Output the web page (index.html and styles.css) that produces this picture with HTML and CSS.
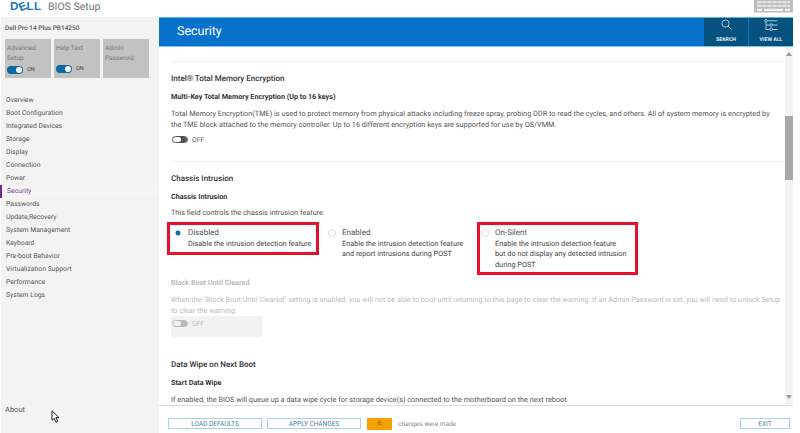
FILE: index.html
```html
<!DOCTYPE html>
<html lang="en">
<head>
<meta charset="utf-8">
<title>BIOS Setup</title>
<link rel="stylesheet" href="styles.css">
</head>
<body>
<div class="app">
  <header class="topbar">
    <span class="logo">D<span class="logo-e">E</span>LL</span>
    <span class="app-title">BIOS Setup</span>
    <svg class="kbd" viewBox="0 0 39 13" width="39" height="13" aria-hidden="true">
      <rect width="39" height="12.500" fill="#bdbdbd"/>
      <path d="M3 1h33v2.200H3zM3 4.800h33V7H3z" fill="#e4e4e4"/>
      <path d="M3 8.800h5V11H3zM10 8.800h19V11H10zM31 8.800h5V11h-5z" fill="#f2f2f2"/>
      <path d="M8 1v6M13 1v6M18 1v6M23 1v6M28 1v6M33 1v6" stroke="#bdbdbd" stroke-width=".8"/>
    </svg>
  </header>
  <div class="columns">
    <aside class="sidebar">
      <div class="model">Dell Pro 14 Plus PB14250</div>
      <div class="tiles">
        <div class="tile"><div class="tile-label">Advanced Setup</div><div class="tile-toggle"><span class="sw sw-on"></span><span>ON</span></div></div>
        <div class="tile"><div class="tile-label tile-one">Help Text</div><div class="tile-toggle"><span class="sw sw-on"></span><span>ON</span></div></div>
        <div class="tile"><div class="tile-label">Admin Password</div></div>
      </div>
      <nav class="nav">
        <a>Overview</a>
        <a>Boot Configuration</a>
        <a>Integrated Devices</a>
        <a>Storage</a>
        <a>Display</a>
        <a>Connection</a>
        <a>Power</a>
        <a class="current">Security</a>
        <a>Passwords</a>
        <a>Update,Recovery</a>
        <a>System Management</a>
        <a>Keyboard</a>
        <a>Pre-boot Behavior</a>
        <a>Virtualization Support</a>
        <a>Performance</a>
        <a>System Logs</a>
      </nav>
      <div class="about">About
        <svg class="cursor" viewBox="0 0 9 13" width="9" height="13" aria-hidden="true"><path d="M1 .8v9.400l2.200-1.900 1.800 3.900 1.700-.8-1.800-3.800H8z" fill="#fff" stroke="#222" stroke-width="1"/></svg>
      </div>
    </aside>
    <main class="main">
      <div class="banner">
        <h1>Security</h1>
        <div class="banner-btn">
          <svg viewBox="0 0 11 11" width="11" height="11" aria-hidden="true"><circle cx="4.500" cy="4.500" r="3.600" fill="none" stroke="#cfe0ea" stroke-width=".8"/><path d="M7 7l3.500 3.500" stroke="#cfe0ea" stroke-width=".9"/></svg>
          <span>SEARCH</span>
        </div>
        <div class="banner-btn">
          <svg viewBox="0 0 14 12" width="14" height="12" aria-hidden="true"><g fill="none" stroke="#cfe0ea" stroke-width=".8"><circle cx="2" cy="1.800" r="1.300"/><path d="M3.500 1.800h10M2 3.200V10.500h3.500M2 6h3.500M9 6h4.500M9 10.500h4.500"/><circle cx="7.200" cy="6" r="1.300"/><circle cx="7.200" cy="10.300" r="1.300"/></g></svg>
          <span>VIEW ALL</span>
        </div>
      </div>
      <div class="scroll-wrap">
        <div class="content">
          <section class="group first">
            <h2>Intel® Total Memory Encryption</h2>
            <h3>Multi-Key Total Memory Encryption (Up to 16 keys)</h3>
            <p>Total Memory Encryption(TME) is used to protect memory from physical attacks including freeze spray, probing DDR to read the cycles, and others. All of system memory is encrypted by<br>the TME block attached to the memory controller. Up to 16 different encryption keys are supported for use by OS/VMM.</p>
            <div class="toggle-row"><span class="sw sw-off"></span><span>OFF</span></div>
          </section>
          <section class="group second">
            <h2>Chassis Intrusion</h2>
            <h3>Chassis Intrusion</h3>
            <p>This field controls the chassis intrusion feature.</p>
            <div class="options">
              <div class="option opt-disabled boxed">
                <span class="radio radio-on"></span>
                <div><div class="opt-name">Disabled</div><div class="opt-desc">Disable the intrusion detection feature</div></div>
              </div>
              <div class="option opt-enabled">
                <span class="radio"></span>
                <div><div class="opt-name">Enabled</div><div class="opt-desc">Enable the intrusion detection feature<br>and report intrusions during POST</div></div>
              </div>
              <div class="option opt-silent boxed">
                <span class="radio"></span>
                <div><div class="opt-name">On-Silent</div><div class="opt-desc">Enable the intrusion detection feature<br>but do not display any detected intrusion<br>during POST</div></div>
              </div>
            </div>
            <div class="muted">
              <h3>Block Boot Until Cleared</h3>
              <p>When the "Block Boot Until Cleared" setting is enabled, you will not be able to boot until returning to this page to clear the warning. If an Admin Password is set, you will need to unlock Setup<br>to clear the warning.</p>
              <div class="toggle-row shaded"><span class="sw sw-dim"></span><span>OFF</span></div>
            </div>
          </section>
          <section class="group third">
            <h2>Data Wipe on Next Boot</h2>
            <h3>Start Data Wipe</h3>
            <p>If enabled, the BIOS will queue up a data wipe cycle for storage device(s) connected to the motherboard on the next reboot.</p>
          </section>
        </div>
        <div class="scrollbar">
          <span class="arrow up"></span>
          <span class="thumb"></span>
          <span class="arrow down"></span>
        </div>
      </div>
      <footer class="footer">
        <button class="btn btn-wide">LOAD DEFAULTS</button>
        <button class="btn btn-wide">APPLY CHANGES</button>
        <span class="count">0</span>
        <span class="changes">changes were made</span>
        <button class="btn btn-exit">EXIT</button>
      </footer>
    </main>
  </div>
</div>
</body>
</html>
```
FILE: styles.css
```css
* { box-sizing: border-box; }
html, body { margin: 0; height: 100%; overflow: hidden; background: #fff; }
body { font-family: Roboto, "Liberation Sans", sans-serif; color: #444; font-size: 7.500px; text-rendering: geometricPrecision; }
.app { width: 800px; height: 433px; display: flex; flex-direction: column; }

.topbar { height: 17px; display: flex; align-items: center; position: relative; padding: 0 0 4px 10px; }
.logo { font-family: "Liberation Sans", sans-serif; font-weight: 700; font-size: 11.500px; color: #1d76bd; width: 38px; letter-spacing: .3px; }
.logo-e { display: inline-block; transform: rotate(-25deg); }
.app-title { font-size: 10.500px; color: #757575; }
.kbd { position: absolute; right: 7px; top: 0; }

.columns { flex: 1; display: flex; min-height: 0; }
.sidebar { width: 158px; background: #f3f3f3; margin-left: 1px; padding: 7px 0 0 4px; display: flex; flex-direction: column; }
.model { font-size: 6.500px; color: #555; height: 15px; line-height: 9px; font-weight: 500; }
.tiles { display: flex; gap: 3px; }
.tile { width: 46px; height: 39px; background: #c2c2c2; padding: 4px 2px; color: #777; font-size: 6.500px; line-height: 10px; position: relative; }
.tile-label { height: 23px; }
.tile-one { height: 22px; }
.tile-toggle { display: flex; align-items: center; gap: 4px; font-size: 5.500px; color: #444; line-height: 8px; }
.sw { display: inline-block; width: 16px; height: 8px; border-radius: 4px; position: relative; flex: none; }
.sw::after { content: ""; position: absolute; top: 1px; width: 6px; height: 6px; border-radius: 50%; background: #fff; }
.sw-on { background: #0b6a9f; }
.sw-on::after { right: 1px; }
.sw-off { height: 7px; background: #fff; border: 1px solid #555; box-shadow: inset -6px 0 0 #555; }
.sw-off::after { display: none; }
.sw-dim { height: 7px; background: #f2f2f2; border: 1px solid #bbb; box-shadow: inset -6px 0 0 #bbb; }
.sw-dim::after { display: none; }

.nav { margin: 15.500px 0 0 -4px; display: flex; flex-direction: column; }
.nav a { display: block; height: 13px; line-height: 13px; padding-left: 5px; color: #555; font-size: 6.800px; }
.nav a.current { color: #7a3f97; border-left: 2px solid #6e2c91; margin-left: -1px; padding-left: 5px; background: #f5f5f5; }
.about { margin-top: auto; height: 28px; line-height: 10px; font-size: 7.500px; color: #555; position: relative; }
.cursor { position: absolute; left: 46px; top: 5px; }

.main { width: 634px; display: flex; flex-direction: column; min-height: 0; }
.banner { height: 30px; background: #0672cb; display: flex; align-items: stretch; color: #fff; border-top: 1px solid #5ab2e6; border-bottom: 1px solid #7cc4ec; }
.banner h1 { flex: 1; margin: 0; padding: 6px 0 0 18px; font-size: 12.500px; font-weight: 400; line-height: 16px; }
.banner-btn { width: 44px; background: #05527f; margin-left: 1px; display: flex; flex-direction: column; align-items: center; font-size: 5.200px; font-weight: 700; color: #e6eef3; padding: 1px 0 3px; justify-content: space-between; }

.scroll-wrap { flex: 1; display: flex; min-height: 0; border-bottom: 1px solid #ddd; }
.content { flex: 1; overflow: hidden; padding: 14px 1px 0 12px; min-width: 0; }
.group { border-top: 1px solid #f0f0f0; }
.group h2 { margin: 0; font-size: 8px; font-weight: 500; color: #333; line-height: 12px; }
.group h3 { margin: 0; font-size: 7.200px; font-weight: 700; color: #333; line-height: 10px; }
.group p { margin: 0; font-size: 7.320px; line-height: 10.500px; color: #555; }
.first { padding-top: 11px; height: 100px; }
.first h3 { margin-top: 7px; }
.first p { margin-top: 7px; }
.toggle-row { display: flex; align-items: center; gap: 4px; font-size: 6.800px; color: #666; margin: 4px 0 0 1px; height: 11px; }
.second { padding-top: 11px; height: 188px; }
.second h3 { margin-top: 7px; }
.second > p { margin-top: 6px; }
.options { display: flex; margin-top: 3.500px; height: 56px; }
.option { display: flex; gap: 6px; font-size: 7.300px; line-height: 10.500px; color: #444; padding-top: 6px; align-items: flex-start; }
.radio { width: 8px; height: 8px; border-radius: 50%; border: 1px solid #ddd; background: #fff; margin-top: 1px; flex: none; }
.radio-on { border: 0; background: radial-gradient(circle, #0a6cb0 0 2.200px, #fff 2.800px); }
.opt-name { font-size: 8px; color: #555; }
.boxed { outline: 3px solid #e8112d; outline-offset: -3px; }
.opt-disabled { width: 152px; height: 33px; margin-left: -4px; padding-left: 7px; }
.opt-enabled { width: 149px; margin-left: 9px; }
.opt-silent { width: 161px; height: 53px; padding-left: 4px; }
.muted { color: #bbb; }
.muted h3 { color: #bbb; margin-top: 0; }
.muted p { color: #bbb; margin-top: 7px; }
.shaded { background: #f2f2f2; width: 91px; height: 21px; color: #bbb; margin: 0; padding: 4px 0 0 1px; align-items: flex-start; }
.third { border-top: 0; padding-top: 10px; }
.third h3 { margin-top: 7px; }
.third p { margin-top: 7px; }

.scrollbar { width: 8px; background: #f4f4f4; position: relative; flex: none; }
.thumb { position: absolute; left: 0; right: 0; top: 69px; height: 64px; background: #a9a9a9; }
.arrow { position: absolute; left: 1px; border-left: 3px solid transparent; border-right: 3px solid transparent; }
.arrow.up { top: 5px; border-bottom: 4px solid #999; }
.arrow.down { bottom: 6px; border-top: 4px solid #999; }

.footer { height: 27px; display: flex; align-items: center; padding: 8px 0 0 9px; }
.btn { height: 11px; padding: 0; background: #fff; border: 1px solid #a7d3e8; color: #4f7f9e; font: 400 6.500px Roboto, "Liberation Sans", sans-serif; }
.btn-wide { width: 94px; margin-right: 5px; }
.count { width: 25px; height: 12px; background: #f2a100; color: #7a5a10; font-size: 6px; text-align: center; line-height: 12px; margin-left: 1px; }
.changes { margin-left: 6px; font-size: 6.500px; color: #888; }
.btn-exit { width: 50px; margin-left: auto; margin-right: 3px; }
```
